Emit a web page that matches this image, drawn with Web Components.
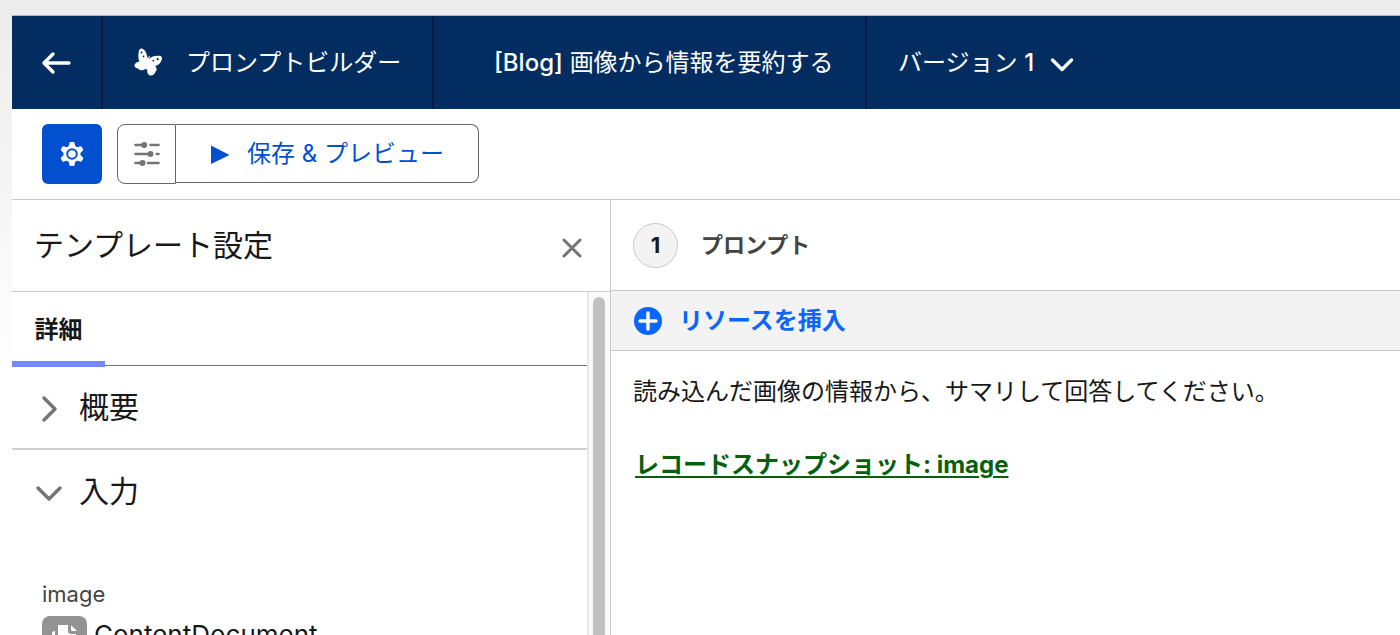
<!DOCTYPE html>
<html lang="ja">
<head>
<meta charset="utf-8">
<title>プロンプトビルダー</title>
<style>
html, body { margin: 0; height: 100%; }
body {
  font-family: Inter, "Noto Sans CJK JP", sans-serif;
  font-size: 24px; line-height: 36px; color: #181818;
  background: linear-gradient(#ececec, #f4f4f4 160px, #fff 380px);
  overflow: hidden;
}
</style>
</head>
<body>
<prompt-builder></prompt-builder>
<script>
const base = `
  * { box-sizing: border-box; }
  button { font: inherit; color: inherit; background: none; border: 0; margin: 0; padding: 0; cursor: pointer; }
  a { color: inherit; text-decoration: none; }
  h1, h2, h3, p { margin: 0; font: inherit; }
  svg { display: block; flex: none; }
`;
function define(name, css, html) {
  customElements.define(name, class extends HTMLElement {
    constructor() {
      super();
      this.attachShadow({ mode: "open" }).innerHTML = `<style>${base}${css}</style>${html}`;
    }
  });
}

define("builder-header", `
  :host { display: flex; height: 94px; border-top: 1px solid #a9b7c6; background: #032d60; color: #fff; }
  .cell { display: flex; align-items: center; }
  .back, .app, .name { border-right: 2px solid #021b40; }
  .back { width: 91px; padding-left: 29px; }
  .app { width: 331px; padding-left: 31px; gap: 23px; }
  .name { width: 433px; padding-left: 60px; }
  .latin { font-weight: 500; }
  .version { gap: 16px; padding-left: 31px; }
`, `
  <a class="cell back" href="#" aria-label="戻る"><svg width="30" height="24" viewBox="0 0 30 24" fill="none" stroke="#fff" stroke-width="3.400" stroke-linecap="round" stroke-linejoin="round"><path d="M12 3 3 12l9 9M3.500 12H28"/></svg></a>
  <div class="cell app">
    <svg width="29" height="29" viewBox="0 0 29 29" fill="#fff"><path fill-rule="evenodd" d="M7.500.5C10.500 1 12.700 4.500 13.200 9l.8 1.200 1-2.500.9.300-.9 3C17.500 8.300 22 7.500 26 8c2.500.4 2.400 3 1 5.500-1.300 2.500-3.500 4.200-6 4.500 2 2 2.200 4 .6 5.500C20.500 28 15.500 28.500 14 26c-.9-1.600-.8-3-.9-4.500l-1.300-.5C8.500 23 6 22.700 4.500 20.800 1 20.500-.5 18 1 16c1.200-1.600 2.600-2.300 4.500-2.500C4.300 11 4 8 4.700 4 5.100 1.800 5.700.4 7.500.5ZM7.500 3.400a1 1 0 1 0 0 2 1 1 0 0 0 0-2Zm2 4.100a.9.9 0 1 0 0 1.800.9.9 0 0 0 0-1.800Zm14.200 2.600a1.100 1.100 0 1 0 0 2.200 1.100 1.100 0 0 0 0-2.200Zm-4.300 1.700a.9.9 0 1 0 0 1.800.9.9 0 0 0 0-1.800Z"/></svg>
    <h1>プロンプトビルダー</h1>
  </div>
  <div class="cell name"><span><span class="latin">[Blog]</span> 画像から情報を要約する</span></div>
  <button class="version cell"><span>バージョン <span class="latin">1</span></span><svg width="24" height="24" viewBox="0 0 24 24" fill="none" stroke="#fff" stroke-width="3.400" stroke-linecap="round" stroke-linejoin="round"><path d="m2.500 9 9.500 9.500L21.500 9"/></svg></button>
`);

define("builder-toolbar", `
  :host { display: flex; align-items: flex-start; height: 91px; padding: 15px 30px; border-bottom: 1px solid #c9c9c9; background: #fff; }
  button { display: flex; align-items: center; justify-content: center; height: 60px; }
  .gear { width: 60px; margin-right: 15px; border-radius: 6px; background: #0250d0; }
  .tune { width: 59px; border: 1px solid #666; border-radius: 8px 0 0 8px; }
  .save { width: 303px; height: 59px; gap: 17px; border: 1px solid #666; border-left: 0; border-radius: 0 8px 8px 0; color: #0250d0; }
`, `
  <button class="gear" aria-label="設定"><svg width="26" height="26" viewBox="0 0 26 26"><g fill="#fff" stroke="#fff" stroke-width="2" stroke-linejoin="round"><circle cx="13" cy="13" r="7.500"/><path d="M11.500 2h3l1 4.500v13l-1 4.500h-3l-1-4.500v-13Z"/><path transform="rotate(60 13 13)" d="M11.500 2h3l1 4.500v13l-1 4.500h-3l-1-4.500v-13Z"/><path transform="rotate(120 13 13)" d="M11.500 2h3l1 4.500v13l-1 4.500h-3l-1-4.500v-13Z"/></g><circle cx="13" cy="13" r="4.800" fill="#fff" stroke="#0250d0" stroke-width="2"/></svg></button>
  <button class="tune" aria-label="調整"><svg width="26" height="26" viewBox="0 0 26 26" fill="#747474" stroke="#747474" stroke-width="2.600" stroke-linecap="round"><path d="M1.500 4H10M16.500 4H24.500M1.500 13H16M22.800 13h1.700M1.500 22H8M14 22h10.500"/><g stroke="none"><circle cx="10.200" cy="4" r="3"/><circle cx="16.500" cy="13" r="3"/><circle cx="8.500" cy="22" r="3"/></g></svg></button>
  <button class="save"><svg width="20" height="20" viewBox="0 0 20 20" fill="#0250d0"><path d="M1 1.500 19.500 11 1 20Z"/></svg>保存 &amp; プレビュー</button>
`);

define("settings-section", `
  :host { display: block; }
  button { display: flex; align-items: center; width: 100%; height: 81px; padding: 0 23px; gap: 16px; font-size: 30px; line-height: 42px; }
  svg { transform: rotate(-90deg); margin-top: 5px; }
  :host([open]) svg { transform: none; }
`, `
  <button><svg width="28" height="28" viewBox="0 0 28 28" fill="none" stroke="#747474" stroke-width="3.400" stroke-linecap="round" stroke-linejoin="round"><path d="m3 9 11 11L25 9"/></svg><slot name="title"></slot></button>
  <slot></slot>
`);

define("template-settings", `
  :host { display: flex; flex-direction: column; min-height: 0; border-right: 1px solid #c9c9c9; background: #fff; }
  header { display: flex; align-items: center; justify-content: space-between; flex: none; height: 92px; padding: 0 27px 2px 22px; border-bottom: 1px solid #c9c9c9; }
  h2 { font-size: 30px; line-height: 44px; }
  header svg { margin-top: 7px; }
  .body { display: flex; flex: 1; min-height: 0; }
  .scroll { flex: 1; min-width: 0; overflow: hidden; }
  .track { flex: none; width: 23px; padding: 5px 4px 0; border-left: 2px solid #e8e8e8; background: #fafafa; }
  .thumb { width: 12px; height: 100%; border-radius: 6px 6px 0 0; background: #c1c1c1; }
  .tabs { display: flex; height: 74px; border-bottom: 1px solid #747474; }
  .tabs button { width: 93px; height: 75px; padding-top: 6px; border-bottom: 6px solid #7589ff; font-weight: 700; }
  .first { border-bottom: 2px solid #d0d0d0; height: 84px; }
  .input { display: grid; gap: 6px; padding: 47px 30px 0; }
  .label { font-size: 22px; line-height: 32px; color: #444; }
  .value { display: flex; gap: 7px; align-items: flex-start; font-size: 26px; line-height: 38px; }
  .icon { display: grid; place-items: center; width: 45px; height: 45px; border-radius: 8px; background: #939393; }
`, `
  <header><h2>テンプレート設定</h2><button aria-label="閉じる"><svg width="22" height="22" viewBox="0 0 22 22" stroke="#747474" stroke-width="3" stroke-linecap="round"><path d="m3 3 16 16M19 3 3 19"/></svg></button></header>
  <div class="body">
    <div class="scroll">
      <div class="tabs" role="tablist"><button role="tab" aria-selected="true">詳細</button></div>
      <settings-section class="first"><span slot="title">概要</span></settings-section>
      <settings-section open><span slot="title">入力</span>
        <div class="input">
          <span class="label">image</span>
          <div class="value"><span class="icon"><svg width="30" height="30" viewBox="0 0 30 30" fill="#fff"><path d="M8 1h10v6q0 3 3 3h5v11q0 2-2 2H10q-2 0-2-2ZM21 1l6 6h-5q-1 0-1-1Z"/><path d="M5 7v15q0 4 4 4h13v1q0 2-2 2H5q-3 0-3-3V10q0-3 3-3"/></svg></span><span>ContentDocument</span></div>
        </div>
      </settings-section>
    </div>
    <div class="track"><div class="thumb"></div></div>
  </div>
`);

define("prompt-editor", `
  :host { display: block; min-width: 0; background: #fff; }
  header { display: flex; align-items: center; height: 91px; padding: 0 22px; gap: 23px; border-bottom: 1px solid #c9c9c9; }
  .num { display: grid; place-items: center; width: 45px; height: 45px; border: 1px solid #c9c9c9; border-radius: 50%; background: #f3f3f3; font-size: 22px; font-weight: 700; }
  h2 { font-size: 22px; font-weight: 700; color: #444; }
  .bar { display: flex; align-items: center; height: 60px; padding: 0 23px; border-bottom: 1px solid #c9c9c9; background: #f3f3f3; }
  .bar button { display: flex; align-items: center; gap: 17px; color: #0b66ff; font-weight: 700; }
  .text { display: grid; gap: 37px; padding: 23px 22px; }
  .text a { margin-left: 2px; color: #05600c; font-weight: 700; text-decoration: underline; text-decoration-thickness: 2px; text-underline-offset: 3px; }
`, `
  <header><span class="num">1</span><h2>プロンプト</h2></header>
  <div class="bar"><button><svg width="28" height="28" viewBox="0 0 28 28"><circle cx="14" cy="14" r="14" fill="#0b66ff"/><path d="M14 6v16M6 14h16" stroke="#fff" stroke-width="3.400" stroke-linecap="round"/></svg>リソースを挿入</button></div>
  <div class="text"><p>読み込んだ画像の情報から、サマリして回答してください。</p><p><a href="#">レコードスナップショット: image</a></p></div>
`);

define("prompt-builder", `
  :host { display: flex; flex-direction: column; height: 100vh; padding: 15px 0 0 12px; box-sizing: border-box; }
  builder-header, builder-toolbar { flex: none; }
  main { display: grid; grid-template-columns: 599px minmax(0, 1fr); grid-template-rows: minmax(0, 1fr); flex: 1; min-height: 0; }
`, `
  <builder-header></builder-header>
  <builder-toolbar></builder-toolbar>
  <main><template-settings></template-settings><prompt-editor></prompt-editor></main>
`);
</script>
</body>
</html>
